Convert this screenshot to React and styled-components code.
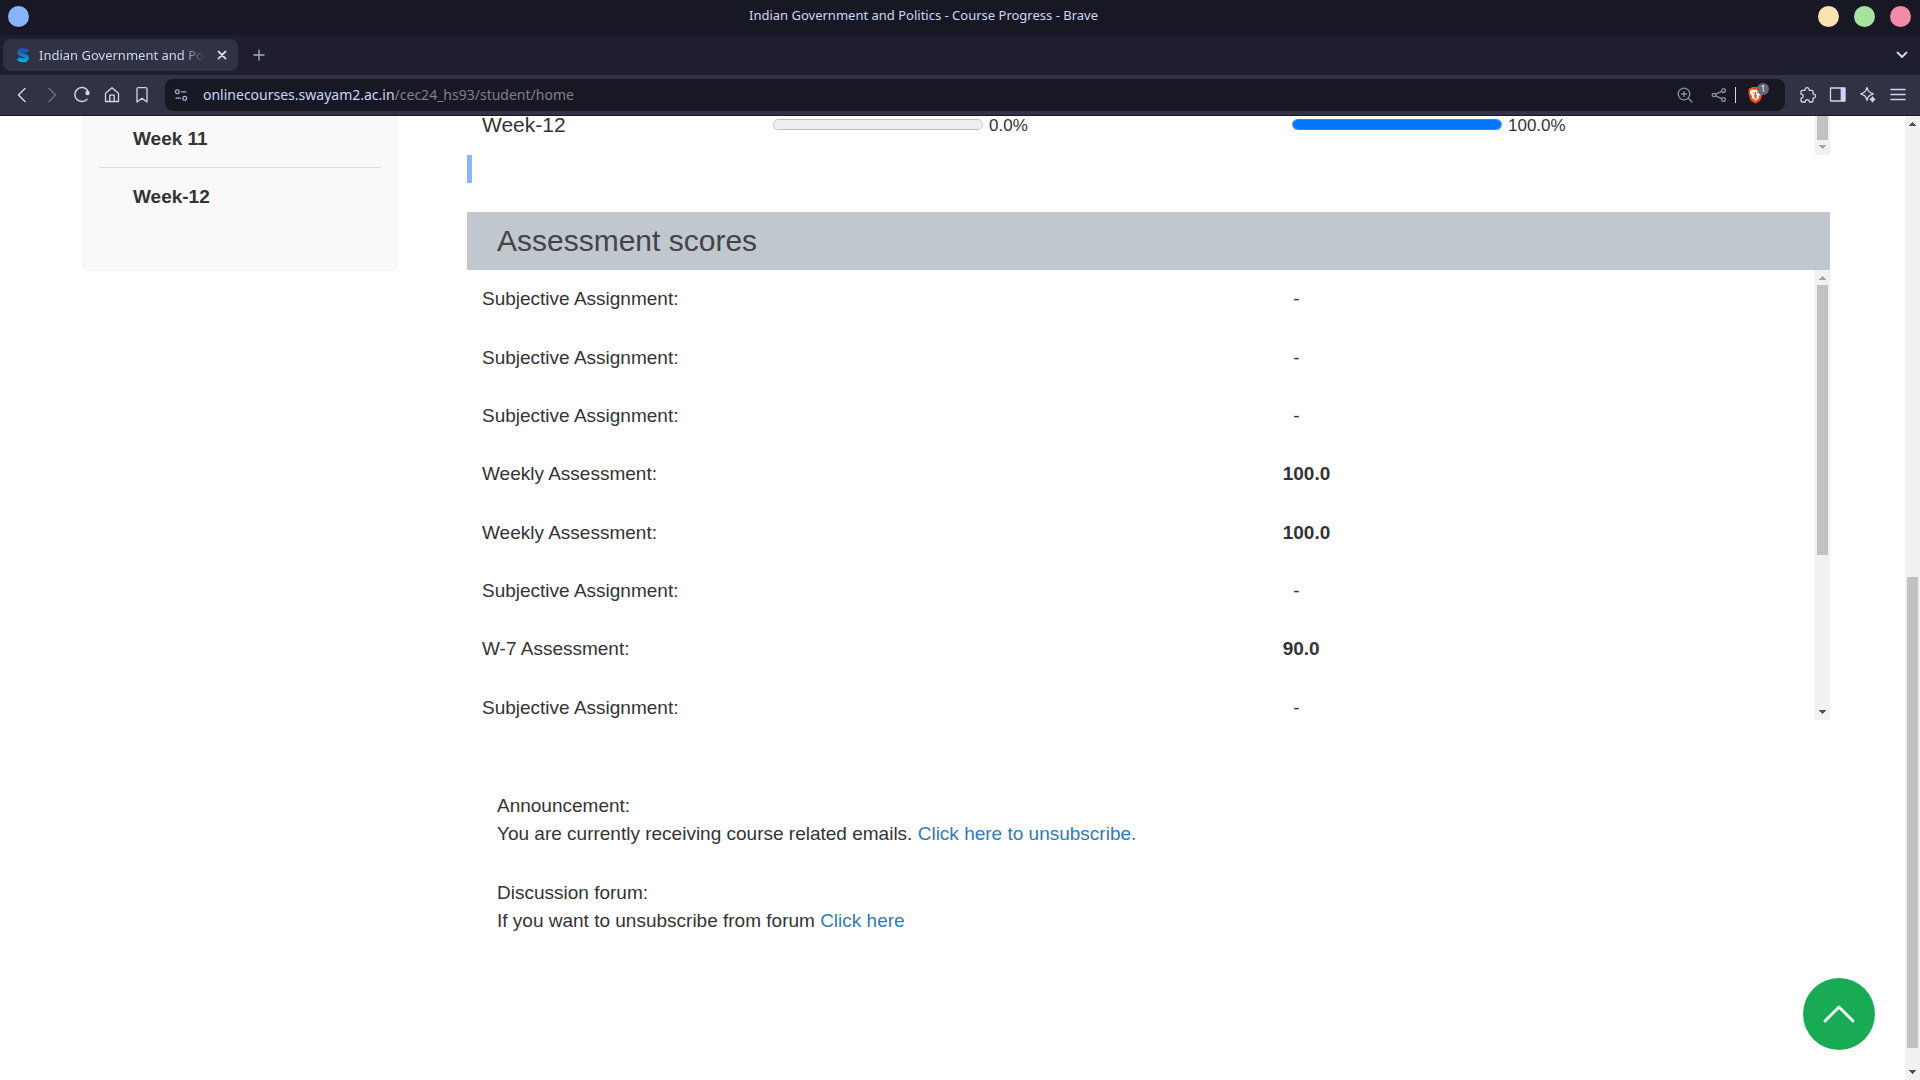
import React from "react";
import styled, { createGlobalStyle } from "styled-components";

const color = {
  mantle: "#181825",
  base: "#1e1e2e",
  surface: "#313244",
  text: "#cdd6f4",
  muted: "#a6adc8",
  faint: "#6c7086",
  page: "#333333",
  link: "#337ab7",
};

const GlobalStyle = createGlobalStyle`
  * { box-sizing: border-box; }
  body { margin: 0; background: #ffffff; }
  button { font: inherit; padding: 0; border: 0; background: none; cursor: pointer; }
`;

const Window = styled.div`
  display: flex;
  flex-direction: column;
  height: 100vh;
  overflow: hidden;
  font-family: "Liberation Sans", Arial, sans-serif;
  color: ${color.page};
`;

/* ---------- Window frame ---------- */

const Chrome = styled.header`
  flex: none;
  font-family: "Noto Sans", sans-serif;
  color: ${color.text};
  border-bottom: 1px solid ${color.mantle};
`;

const TitleBar = styled.div`
  display: flex;
  align-items: center;
  gap: 15px;
  height: 35px;
  padding: 0 9px 2px 8px;
  background: ${color.mantle};
`;

const WindowTitle = styled.div`
  flex: 1;
  margin: 0 -15px;
  padding-bottom: 3px;
  text-align: center;
  font-size: 13px;
  line-height: 20px;
`;

const Dot = styled.button`
  flex: none;
  width: 21px;
  height: 21px;
  border-radius: 50%;
  background: ${(p) => p.$fill};
`;

const TabStrip = styled.div`
  display: flex;
  align-items: center;
  height: 40px;
  padding: 0 8px 0 3px;
  background: ${color.base};
`;

const Tab = styled.div`
  display: flex;
  align-items: center;
  width: 235px;
  height: 32px;
  padding: 0 6px 0 12px;
  border-radius: 8px;
  background: ${color.surface};
`;

const TabTitle = styled.span`
  flex: 1;
  margin: 0 7px 0 8px;
  overflow: hidden;
  white-space: nowrap;
  font-size: 13px;
  line-height: 20px;
  mask-image: linear-gradient(to right, #000 86%, transparent);
`;

const IconButton = styled.button`
  display: grid;
  place-items: center;
  flex: none;
  width: ${(p) => p.$width || 30}px;
  height: 30px;
  color: ${(p) => p.$color || color.text};
`;

const Spacer = styled.div`
  flex: 1;
`;

const NewTab = styled(IconButton)`
  margin-left: 6px;
`;

const Toolbar = styled.div`
  display: flex;
  align-items: center;
  height: 40px;
  padding: 0 7px;
  background: ${color.surface};
`;

const AddressBar = styled.div`
  display: flex;
  flex: 1;
  align-items: center;
  height: 32px;
  margin: 0 8px;
  padding-right: 15px;
  border-radius: 8px;
  background: ${color.mantle};
`;

const Address = styled.a`
  flex: 1;
  margin-left: 7px;
  font-size: 14px;
  line-height: 20px;
  color: ${color.text};
  text-decoration: none;
`;

const AddressPath = styled.span`
  color: #7f8087;
`;

const Separator = styled.span`
  width: 1px;
  height: 16px;
  margin-right: 4px;
  background: ${color.text};
`;

const ShieldButton = styled(IconButton)`
  position: relative;
`;

const Badge = styled.span`
  position: absolute;
  top: 3px;
  right: 1px;
  width: 12px;
  height: 12px;
  border-radius: 50%;
  background: #636775;
  color: #ffffff;
  font-size: 8px;
  line-height: 12px;
  text-align: center;
`;

/* ---------- Page ---------- */

const Viewport = styled.main`
  display: flex;
  flex: 1;
  min-height: 0;
  background: #ffffff;
`;

const Page = styled.div`
  display: grid;
  flex: 1;
  grid-template-columns: 314px minmax(0, 1fr);
  align-items: start;
  gap: 70px;
  padding: 0 75px 0 83px;
`;

const SideNav = styled.nav`
  padding: 9px 15px 45px;
  border: 1px solid #f1f1f1;
  border-top: 0;
  border-radius: 0 0 6px 6px;
  background: #f9f9f9;
`;

const WeekList = styled.ul`
  display: grid;
  gap: 15px;
  margin: 0;
  padding: 0;
  list-style: none;
`;

const WeekItem = styled.li`
  padding: 0 34px 14px;
  border-bottom: 1px solid #dddddd;

  &:last-child {
    border-bottom: 0;
  }
`;

const WeekLink = styled.a`
  display: block;
  font-size: 19px;
  font-weight: 700;
  line-height: 28px;
  color: ${color.page};
  text-decoration: none;
`;

const ScrollArea = styled.div`
  display: flex;
  height: ${(p) => p.$height}px;
`;

const ScrollContent = styled.div`
  flex: 1;
  min-width: 0;
  overflow: ${(p) => (p.$clip ? "hidden" : "visible")};
`;

const Track = styled.div`
  display: flex;
  flex: none;
  flex-direction: column;
  align-items: center;
  width: 15px;
  background: #f1f1f1;
`;

const Arrow = styled.svg`
  flex: none;
  display: block;
  width: 15px;
  height: 15px;
  fill: ${(p) => (p.$dim ? "#a3a3a3" : "#505050")};
`;

const Rail = styled.div`
  display: flex;
  flex: 1;
  flex-direction: column;
`;

const Thumb = styled.div`
  width: 11px;
  flex: ${(p) => p.$size};
  background: #c1c1c1;
`;

const Gap = styled.div`
  flex: ${(p) => p.$size};
`;

const ProgressRow = styled.div`
  display: grid;
  grid-template-columns: 291fr 519fr 538fr;
  align-items: start;
`;

const WeekName = styled.span`
  padding-left: 15px;
  font-size: 21px;
  line-height: 18px;
`;

const Meter = styled.label`
  display: flex;
  align-items: flex-start;
  gap: 6px;
  padding: 3px 0 0 15px;
  font-size: 17px;
  line-height: 14px;
`;

const Bar = styled.progress`
  appearance: none;
  width: 210px;
  height: 11px;
  border: 1px solid ${(p) => (p.value > 0 ? "#3b82d8" : "#bdbdbd")};
  border-radius: 6px;
  overflow: hidden;
  background: #efefef;

  &::-webkit-progress-bar {
    background: #efefef;
  }

  &::-webkit-progress-value {
    background: #0075ff;
  }
`;

const Selection = styled.div`
  width: 5px;
  height: 28px;
  margin-bottom: 29px;
  background: #89b4fa;
`;

const SectionTitle = styled.h2`
  margin: 0;
  padding: 8px 30px;
  background: #c0c7ce;
  font-size: 30px;
  font-weight: 400;
  line-height: 42px;
  color: #444444;
`;

const Scores = styled.table`
  width: 100%;
  height: 467px;
  border-collapse: collapse;
  table-layout: fixed;
  font-size: 19px;
  line-height: 28px;
`;

const Name = styled.th`
  width: 59.4%;
  padding: 0 15px;
  font-weight: 400;
  text-align: left;
`;

const Score = styled.td`
  padding: 0 15px;
  font-weight: ${(p) => (p.$graded ? 700 : 400)};
`;

const Notices = styled.div`
  display: grid;
  gap: 31px;
  padding: 72px 30px 0;
`;

const Notice = styled.p`
  margin: 0;
  font-size: 19px;
  line-height: 28px;
`;

const Link = styled.a`
  color: ${color.link};
  text-decoration: none;
`;

const ToTop = styled.button`
  position: fixed;
  right: 45px;
  bottom: 30px;
  display: grid;
  place-items: center;
  width: 72px;
  height: 72px;
  border-radius: 50%;
  background: #18ab54;
`;

/* ---------- Icons ---------- */

const Icon = ({ size = 18, width = 1.3, children }) => (
  <svg
    width={size}
    height={size}
    viewBox={`0 0 ${size} ${size}`}
    fill="none"
    stroke="currentColor"
    strokeWidth={width}
    strokeLinecap="round"
    strokeLinejoin="round"
    aria-hidden="true"
  >
    {children}
  </svg>
);

const Favicon = () => (
  <svg width="16" height="16" viewBox="0 0 16 16" aria-hidden="true">
    <defs>
      <linearGradient id="swayam" gradientUnits="userSpaceOnUse" x1="0" y1="1" x2="0" y2="15">
        <stop offset="0" stopColor="#2f3fae" />
        <stop offset="0.5" stopColor="#0d7fd0" />
        <stop offset="1" stopColor="#00b4e6" />
      </linearGradient>
    </defs>
    <path
      d="M12.500 4.600C10.800 2.300 4.300 1.900 4.300 5.200c0 3.200 7.600 2.200 7.600 5.500 0 3.500-6.600 3-8.800.6"
      fill="none"
      stroke="url(#swayam)"
      strokeWidth="4"
    />
  </svg>
);

const Shield = () => (
  <svg width="15" height="18" viewBox="0 0 16 18" aria-hidden="true">
    <path d="M4.200.4h7.600l1.400 1.500 1.300-.2 1.200 2-.6 1.600.5 1.700-1.900 6.400c-.3 1-.9 1.600-1.700 2.200L8 18l-4-2.400c-.8-.6-1.400-1.200-1.700-2.200L.4 7l.5-1.700L.3 3.700l1.200-2 1.300.2z" fill="#fb4f10" />
    <path d="M3.800 3l4.200.7L12.200 3l1.700 2.300-.6 2.600-1.700 2.400.3 1.500L8 15l-3.900-3.200.3-1.500-1.700-2.400-.6-2.600z" fill="#ffffff" />
    <path d="M4.300 6.200l2.600.5-.5 1.300zM11.700 6.200l-2.600.5.5 1.300zM7.500 5.500h1l.3 3.500L10 10l-2 1.300L6 10l1.200-1zM6 12l2-.8 2 .8-2 1.200z" fill="#fb4f10" />
  </svg>
);

const Scrollbar = ({ before, thumb, after, up = true, dimUp, dimDown }) => (
  <Track aria-hidden="true">
    {up && (
      <Arrow $dim={dimUp} viewBox="0 0 15 15">
        <path d="M7 6h1v1h1v1h1v1h1v1H4V9h1V8h1V7h1z" />
      </Arrow>
    )}
    <Rail>
      <Gap $size={before} />
      <Thumb $size={thumb} />
      <Gap $size={after} />
    </Rail>
    <Arrow $dim={dimDown} viewBox="0 0 15 15">
      <path d="M4 5h7v1h-1v1H9v1H8v1H7V8H6V7H5V6H4z" />
    </Arrow>
  </Track>
);

/* ---------- Data ---------- */

const weeks = ["Week 11", "Week-12"];

const scores = [
  ["Subjective Assignment:", null],
  ["Subjective Assignment:", null],
  ["Subjective Assignment:", null],
  ["Weekly Assessment:", "100.0"],
  ["Weekly Assessment:", "100.0"],
  ["Subjective Assignment:", null],
  ["W-7 Assessment:", "90.0"],
  ["Subjective Assignment:", null],
];

const BrowserChrome = () => (
  <Chrome>
    <TitleBar>
      <Dot $fill="#89b4fa" aria-label="Window menu" />
      <WindowTitle>Indian Government and Politics - Course Progress - Brave</WindowTitle>
      <Dot $fill="#f9e2af" aria-label="Minimize" />
      <Dot $fill="#a6e3a1" aria-label="Maximize" />
      <Dot $fill="#f38ba8" aria-label="Close window" />
    </TitleBar>
    <TabStrip>
      <Tab>
        <Favicon />
        <TabTitle>Indian Government and Pol</TabTitle>
        <IconButton $width={20} aria-label="Close tab">
          <Icon size={10} width={1.8}><path d="M1.500 1.500l7 7M8.500 1.500l-7 7" /></Icon>
        </IconButton>
      </Tab>
      <NewTab $color={color.muted} aria-label="New tab">
        <Icon size={12}><path d="M6 1v10M1 6h10" /></Icon>
      </NewTab>
      <Spacer />
      <IconButton $width={20} aria-label="Search tabs">
        <Icon size={12} width={1.8}><path d="M1.500 3.500L6 8l4.500-4.500" /></Icon>
      </IconButton>
    </TabStrip>
    <Toolbar>
      <IconButton aria-label="Back">
        <Icon width={1.5}><path d="M12 2.500L5.500 9l6.500 6.500" /></Icon>
      </IconButton>
      <IconButton $color={color.faint} aria-label="Forward">
        <Icon width={1.5}><path d="M6 2.500L12.500 9 6 15.500" /></Icon>
      </IconButton>
      <IconButton aria-label="Reload">
        <Icon width={1.5}>
          <path d="M13.900 13.400A7 7 0 1 1 14.600 4.500" />
          <circle cx="14.5" cy="7" r="1.5" fill="currentColor" />
        </Icon>
      </IconButton>
      <IconButton aria-label="Home">
        <Icon><path d="M2.500 7.200L9 1.800l6.500 5.400v8.300h-13zM6.800 15.500V9.200h4.400v6.300" /></Icon>
      </IconButton>
      <IconButton aria-label="Bookmark">
        <Icon><path d="M4 3a1.300 1.300 0 0 1 1.300-1.300h7.400A1.300 1.300 0 0 1 14 3v13l-5-3.700L4 16z" /></Icon>
      </IconButton>
      <AddressBar>
        <IconButton $color={color.muted} $width={31} aria-label="Site information">
          <Icon size={14}>
            <circle cx="3.3" cy="3.8" r="1.9" />
            <path d="M7.500 3.800H12M2 10.200h4.500" />
            <circle cx="10.7" cy="10.2" r="1.9" />
          </Icon>
        </IconButton>
        <Address href="#home">
          onlinecourses.swayam2.ac.in<AddressPath>/cec24_hs93/student/home</AddressPath>
        </Address>
        <IconButton $color="#8a8fa8" $width={34} aria-label="Zoom">
          <Icon size={16}>
            <circle cx="7" cy="7" r="5.8" />
            <path d="M11.300 11.300L15 15M7 4.600v4.800M4.600 7h4.800" />
          </Icon>
        </IconButton>
        <IconButton $color="#8a8fa8" $width={33} aria-label="Share">
          <Icon size={16}>
            <circle cx="3" cy="8" r="1.7" />
            <circle cx="12.5" cy="3.5" r="1.9" />
            <circle cx="12.5" cy="12.5" r="1.9" />
            <path d="M4.700 7.200l6-2.900M4.700 8.800l6 2.900" />
          </Icon>
        </IconButton>
        <Separator />
        <ShieldButton aria-label="Brave Shields">
          <Shield />
          <Badge>1</Badge>
        </ShieldButton>
      </AddressBar>
      <IconButton aria-label="Extensions">
        <Icon>
          <path d="M3.200 4.400H6c-.5-3.600 4.700-3.600 4.200 0h2.600c.7 0 1.200.5 1.200 1.200v2.500c3.400-.5 3.400 4.500 0 4v2.700c0 .7-.5 1.200-1.200 1.200h-2.500c.2-3-4.200-3-4 0H3.200C2.500 16 2 15.500 2 14.800v-2.600c2.900.2 2.900-4.200 0-4V5.600c0-.7.5-1.200 1.200-1.200z" />
        </Icon>
      </IconButton>
      <IconButton aria-label="Side panel">
        <Icon>
          <rect x="1.5" y="2" width="14.5" height="13" />
          <path d="M12.300 2.500h3.200v12h-3.200z" fill="currentColor" />
        </Icon>
      </IconButton>
      <IconButton aria-label="Assistant">
        <Icon>
          <path d="M8 1.500c1.200 4 2 4.900 6.300 6.300-4.300 1.400-5.100 2.300-6.300 6.500-1.200-4.200-2-5.100-6.300-6.500C6 6.400 6.800 5.500 8 1.500z" />
          <path d="M13.500 11c.4 1.500.8 1.900 2.300 2.400-1.500.5-1.900.9-2.300 2.400-.4-1.500-.8-1.900-2.300-2.400 1.500-.5 1.900-.9 2.300-2.400z" fill="currentColor" />
        </Icon>
      </IconButton>
      <IconButton aria-label="Menu">
        <Icon width={1.5}><path d="M2 3.500h14M2 8.500h14M2 13.500h14" /></Icon>
      </IconButton>
    </Toolbar>
  </Chrome>
);

export default function App() {
  return (
    <Window>
      <GlobalStyle />
      <BrowserChrome />
      <Viewport>
        <Page>
          <SideNav aria-label="Course weeks">
            <WeekList>
              {weeks.map((week) => (
                <WeekItem key={week}>
                  <WeekLink href="#week">{week}</WeekLink>
                </WeekItem>
              ))}
            </WeekList>
          </SideNav>
          <section>
            <ScrollArea $height={39}>
              <ScrollContent>
                <ProgressRow>
                  <WeekName>Week-12</WeekName>
                  <Meter>
                    <Bar value={0} max={100} />
                    0.0%
                  </Meter>
                  <Meter>
                    <Bar value={100} max={100} />
                    100.0%
                  </Meter>
                </ProgressRow>
              </ScrollContent>
              <Scrollbar up={false} before={0} thumb={24} after={0} dimDown />
            </ScrollArea>
            <Selection />
            <SectionTitle>Assessment scores</SectionTitle>
            <ScrollArea $height={450}>
              <ScrollContent $clip>
                <Scores>
                  <tbody>
                    {scores.map(([name, score], i) => (
                      <tr key={i}>
                        <Name scope="row">{name}</Name>
                        <Score $graded={score !== null}>{score ?? "\u00a0\u00a0-"}</Score>
                      </tr>
                    ))}
                  </tbody>
                </Scores>
              </ScrollContent>
              <Scrollbar before={0} thumb={270} after={150} dimUp />
            </ScrollArea>
            <Notices>
              <Notice>
                Announcement:
                <br />
                You are currently receiving course related emails.{" "}
                <Link href="#unsubscribe">Click here to unsubscribe.</Link>
              </Notice>
              <Notice>
                Discussion forum:
                <br />
                If you want to unsubscribe from forum <Link href="#forum">Click here</Link>
              </Notice>
            </Notices>
          </section>
        </Page>
        <Scrollbar before={446} thumb={471} after={17} />
      </Viewport>
      <ToTop aria-label="Back to top">
        <svg width="36" height="24" viewBox="0 0 36 24" fill="none" aria-hidden="true">
          <path d="M4 19L18 5l14 14" stroke="#f2fff7" strokeWidth="3" strokeLinecap="round" strokeLinejoin="round" />
        </svg>
      </ToTop>
    </Window>
  );
}
